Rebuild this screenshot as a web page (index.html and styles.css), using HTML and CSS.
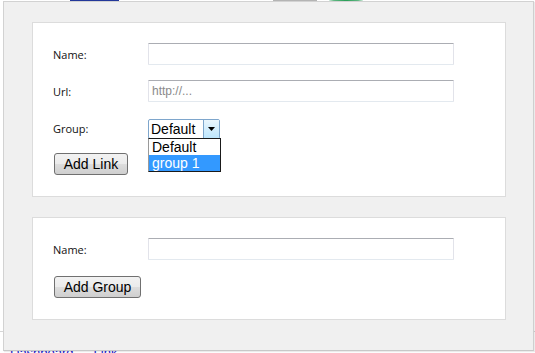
FILE: index.html
```html
<!DOCTYPE html>
<html>
<head>
<meta charset="utf-8">
<link rel="stylesheet" href="styles.css">
</head>
<body>
<div class="page">
  <div class="topbar">
    <span class="tab tab-blue"></span>
    <span class="tab tab-grey"></span>
    <span class="tab tab-green"></span>
  </div>
  <div class="rule"></div>
  <div class="links"><a class="lnk">Dashboard</a><a class="lnk">Link</a></div>
</div>

<div class="dialog">
  <div class="card">
    <div class="row">
      <label class="lbl">Name:</label>
      <input class="field" type="text">
    </div>
    <div class="row">
      <label class="lbl">Url:</label>
      <input class="field" type="text" placeholder="http://...">
    </div>
    <div class="row">
      <label class="lbl">Group:</label>
      <div class="select-wrap">
        <div class="select">
          <span class="select-val">Default</span>
          <span class="select-btn"><svg width="7" height="4" viewBox="0 0 7 4"><path d="M0 0h7L3.5 4z" fill="#000"/></svg></span>
        </div>
        <ul class="list">
          <li class="opt">Default</li>
          <li class="opt opt-sel">group 1</li>
        </ul>
      </div>
    </div>
    <button class="btn btn-link">Add Link</button>
  </div>

  <div class="card card2">
    <div class="row">
      <label class="lbl">Name:</label>
      <input class="field" type="text">
    </div>
    <button class="btn btn-group">Add Group</button>
  </div>
</div>
</body>
</html>
```

FILE: styles.css
```css
html, body {
  margin: 0;
  padding: 0;
  background: #fff;
  width: 535px;
  height: 353px;
  overflow: hidden;
}

.page {
  position: relative;
  height: 353px;
}

.topbar {
  display: flex;
  height: 2px;
}
.tab { display: block; height: 2px; }
.tab-blue { margin-left: 70px; width: 49px; background: #23389a; }
.tab-grey { margin-left: 154px; width: 44px; background: #b4b4b4; }
.tab-green { margin-left: 12px; width: 34px; background: #2ca05a; border-radius: 50% 50% 0 0; }

.rule {
  margin-top: 329px;
  height: 1px;
  width: 535px;
  background: #d6d6d6;
}

.links {
  display: flex;
  gap: 20px;
  padding-left: 10px;
  margin-top: 14px;
  font: 13px "Liberation Sans", Arial, sans-serif;
  line-height: 14px;
}
.lnk { color: #1a1ad0; text-decoration: underline; }

.dialog {
  position: absolute;
  left: 3px;
  top: 1px;
  width: 531px;
  height: 350px;
  background: #f0f0f0;
  border: 1px solid #d2d2d2;
  border-right-color: #cfcfcf;
  border-bottom-color: #c8c8c8;
  padding: 20px 27px 0 28px;
  box-sizing: border-box;
  display: flex;
  flex-direction: column;
  gap: 20px;
  box-shadow: 1px 1px 1px rgba(0,0,0,0.08);
}

.card {
  background: #fff;
  border: 1px solid #dcdcdc;
  padding: 20px 20px 21px 20px;
  display: flex;
  flex-direction: column;
  gap: 15px;
  width: 474px;
  box-sizing: border-box;
}
.card2 { gap: 16px; padding-bottom: 21px; }

.row {
  display: flex;
  align-items: center;
  height: 22px;
}

.lbl {
  width: 95px;
  flex: none;
  font: 11px "Open Sans", "DejaVu Sans", sans-serif;
  color: #111;
}

.field {
  width: 306px;
  height: 22px;
  box-sizing: border-box;
  margin: 0;
  border: 1px solid #e2e3ea;
  border-top-color: #abadb3;
  border-bottom-color: #e3e9ef;
  border-radius: 1px;
  padding: 2px 3px;
  font: 12px "Liberation Sans", Arial, sans-serif;
  background: #fff;
  outline: none;
}
.field::placeholder { color: #8a8a8a; }

.select-wrap {
  position: relative;
  width: 73px;
  height: 21px;
}
.select {
  display: flex;
  width: 72px;
  height: 20px;
  box-sizing: border-box;
  border: 1px solid #7ea6cc;
  border-radius: 2px;
  background: #fff;
  margin-top: 1px;
}
.select-val {
  flex: 1;
  font: 14px "Liberation Sans", Arial, sans-serif;
  line-height: 18px;
  padding-left: 2px;
  color: #000;
}
.select-btn {
  width: 15px;
  border-left: 1px solid #7ea6cc;
  background: linear-gradient(#eaf6fd, #bde6fd);
  display: flex;
  align-items: center;
  justify-content: center;
}

.list {
  position: absolute;
  left: 0;
  top: 20px;
  width: 73px;
  margin: 0;
  padding: 0;
  list-style: none;
  background: #fff;
  border: 1px solid #1a1a1a;
  border-left-color: #9a9a9a;
  box-sizing: border-box;
  z-index: 2;
}
.opt {
  font: 14px "Liberation Sans", Arial, sans-serif;
  line-height: 16px;
  height: 16px;
  padding-left: 3px;
  color: #000;
}
.opt-sel { background: #3399ff; color: #fff; }

.btn {
  align-self: flex-start;
  margin: 0 0 0 1px;
  height: 22px;
  border: 1px solid #707070;
  border-radius: 3px;
  background: linear-gradient(#f2f2f2 0%, #ebebeb 50%, #dddddd 51%, #cfcfcf 100%);
  font: 14px "Liberation Sans", Arial, sans-serif;
  color: #000;
  padding: 0;
  line-height: 20px;
  white-space: nowrap;
  text-align: center;
}
.btn-link { width: 74px; margin-top: -1px; }
.btn-group { width: 87px; }
```
